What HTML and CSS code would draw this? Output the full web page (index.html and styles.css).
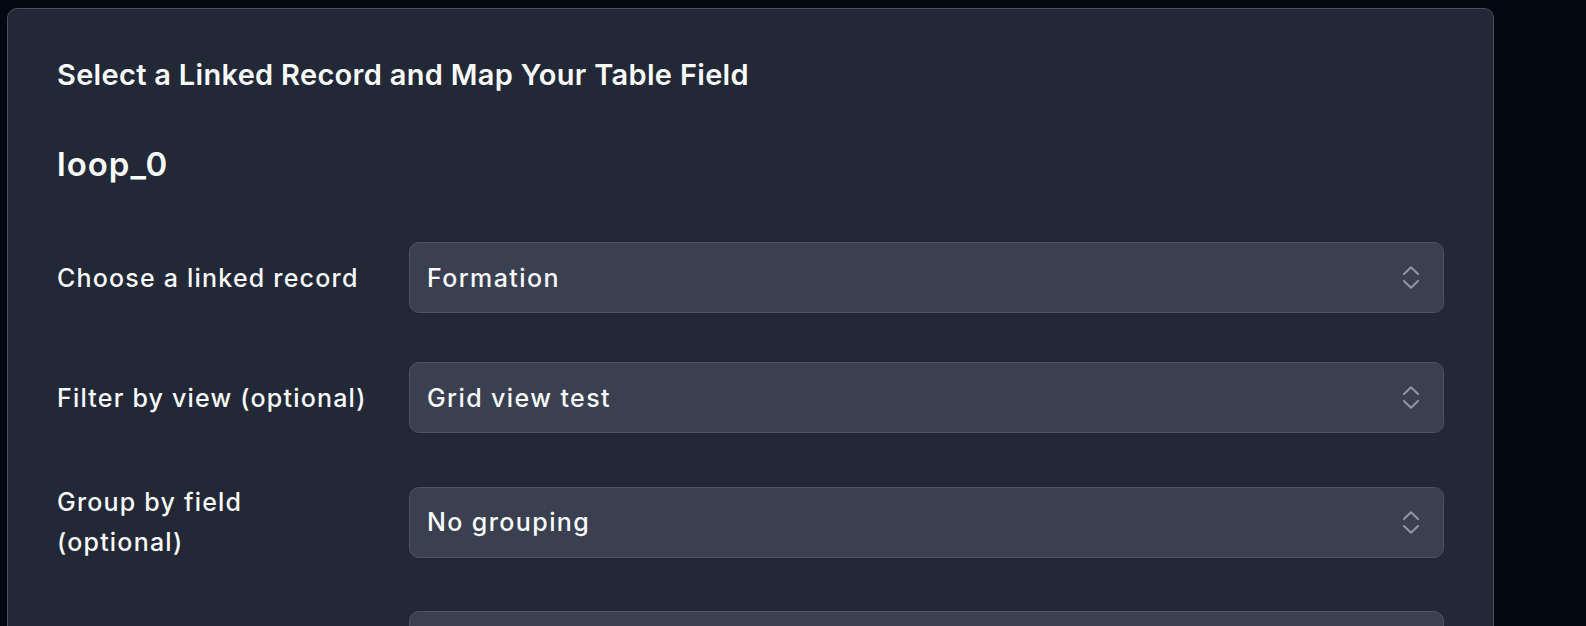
FILE: index.html
```html
<!DOCTYPE html>
<html lang="en">
<head>
  <meta charset="UTF-8" />
  <meta name="viewport" content="width=device-width, initial-scale=1.0"/>
  <title>Linked Record Mapping</title>
  <link rel="stylesheet" href="styles.css">
</head>
<body>
  <div class="card">
    <h1 class="card-title">Select a Linked Record and Map Your Table Field</h1>
    <h2 class="loop-name">loop_0</h2>

    <div class="form">
      <div class="form-row">
        <label class="form-label">Choose a linked record</label>
        <div class="select">
          <span class="select-value">Formation</span>
          <svg class="select-icon" viewBox="0 0 16 23" fill="none"><path d="M1 8L8 1.2L15 8M1 15L8 21.8L15 15"/></svg>
        </div>
      </div>

      <div class="form-row">
        <label class="form-label">Filter by view (optional)</label>
        <div class="select">
          <span class="select-value">Grid view test</span>
          <svg class="select-icon" viewBox="0 0 16 23" fill="none"><path d="M1 8L8 1.2L15 8M1 15L8 21.8L15 15"/></svg>
        </div>
      </div>

      <div class="form-row">
        <label class="form-label">Group by field (optional)</label>
        <div class="select">
          <span class="select-value">No grouping</span>
          <svg class="select-icon" viewBox="0 0 16 23" fill="none"><path d="M1 8L8 1.2L15 8M1 15L8 21.8L15 15"/></svg>
        </div>
      </div>

      <div class="form-row">
        <label class="form-label">Map to field</label>
        <div class="select">
          <span class="select-value">Select a field</span>
          <svg class="select-icon" viewBox="0 0 16 23" fill="none"><path d="M1 8L8 1.2L15 8M1 15L8 21.8L15 15"/></svg>
        </div>
      </div>
    </div>
  </div>
</body>
</html>
```

FILE: styles.css
```css
:root {
  --page-bg: #030712;
  --card-bg: #222835;
  --card-border: #4a505d;
  --field-bg: #3a4050;
  --field-border: #4d5363;
  --text: #f9fafb;
  --icon: #9096a2;
}

html, body {
  height: 100%;
}

body {
  margin: 0;
  padding: 8px 0 0 7px;
  background: var(--page-bg);
  color: var(--text);
  font-family: Inter, "Noto Sans", sans-serif;
  overflow: hidden;
}

.card {
  box-sizing: border-box;
  width: 1487px;
  min-height: 700px;
  padding: 48px 49px;
  background: var(--card-bg);
  border: 1px solid var(--card-border);
  border-radius: 10px;
}

.card-title {
  margin: 0;
  font-size: 29px;
  line-height: 36px;
  font-weight: 600;
  letter-spacing: 0.3px;
}

.loop-name {
  margin: 52px 0 0;
  font-size: 33px;
  line-height: 38px;
  font-weight: 600;
  letter-spacing: 1px;
}

.form {
  margin-top: 59px;
  display: flex;
  flex-direction: column;
  gap: 49px;
}

.form-row {
  display: flex;
  align-items: center;
  gap: 42px;
}

.form-label {
  flex: 0 0 310px;
  font-size: 25px;
  line-height: 40px;
  font-weight: 500;
  letter-spacing: 1.2px;
}

.select {
  flex: 1;
  box-sizing: border-box;
  height: 71px;
  display: flex;
  align-items: center;
  justify-content: space-between;
  padding: 0 24px 0 17px;
  background: var(--field-bg);
  border: 1px solid var(--field-border);
  border-radius: 10px;
}

.select-value {
  font-size: 25px;
  font-weight: 500;
  letter-spacing: 1.4px;
}

.select-icon {
  width: 16px;
  height: 23px;
  stroke: var(--icon);
  stroke-width: 2;
  stroke-linecap: round;
  stroke-linejoin: round;
}
```
